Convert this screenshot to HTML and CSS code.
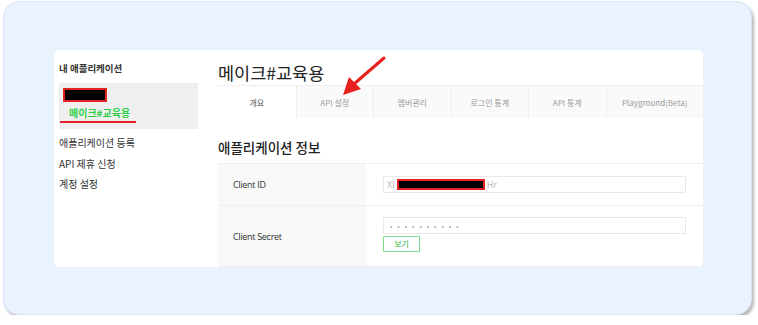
FILE: index.html
```html
<!DOCTYPE html>
<html>
<head>
    <title>내 애플리케이션</title>
    <link rel="stylesheet" href="styles.css">
</head>
<body>
    <div class="frame">
        <div class="card">
            <div class="sidebar">
                <div class="side-title">내 애플리케이션</div>
                <div class="app-box">
                    <div class="redact"></div>
                    <div class="app-name">메이크#교육용</div>
                    <div class="underline"></div>
                </div>
                <ul class="side-menu">
                    <li>애플리케이션 등록</li>
                    <li>API 제휴 신청</li>
                    <li>계정 설정</li>
                </ul>
            </div>

            <div class="main">
                <h1>메이크#교육용</h1>
                <div class="tabs">
                    <div class="tab active">개요</div>
                    <div class="tab">API 설정</div>
                    <div class="tab">멤버관리</div>
                    <div class="tab">로그인 통계</div>
                    <div class="tab">API 통계</div>
                    <div class="tab last">Playground(Beta)</div>
                </div>

                <h2>애플리케이션 정보</h2>
                <div class="info">
                    <div class="row">
                        <div class="label">Client ID</div>
                        <div class="value">
                            <div class="field">Xl<span class="redact-line"></span>Hr</div>
                        </div>
                    </div>
                    <div class="row tall">
                        <div class="label">Client Secret</div>
                        <div class="value top">
                            <div class="field dots">• • • • • • • • • •</div>
                            <button class="btn">보기</button>
                        </div>
                    </div>
                </div>

                <svg class="arrow" width="60" height="50" viewBox="0 0 60 50">
                    <line x1="54" y1="4" x2="24" y2="30" stroke="#e8201e" stroke-width="3" stroke-linecap="round"/>
                    <polygon points="13,41 19,23 31,35" fill="#e8201e"/>
                </svg>
            </div>
        </div>
    </div>
</body>
</html>
```

FILE: styles.css
```css
body { margin: 0; background: #fff; font-family: "Noto Sans CJK KR", "Noto Sans", sans-serif; color: #333; }

.frame { margin: 1px 0 0 3px; width: 749px; height: 314px; box-sizing: border-box; padding: 48px 0 0 50px; background: #eaf2fe; border: 1px solid #d6e5fa; border-radius: 16px; box-shadow: 2px 3px 3px rgba(0, 0, 0, 0.28); }

.card { display: flex; width: 649px; height: 217px; background: #fff; border-radius: 5px; overflow: hidden; }

.sidebar { width: 164px; padding: 9px 0 0 5px; box-sizing: border-box; }
.side-title { font-size: 9.5px; font-weight: 700; line-height: 18px; color: #333; }
.app-box { position: relative; width: 139px; height: 46px; margin-top: 6px; background: #efefef; }
.redact { position: absolute; left: 4px; top: 5px; width: 40px; height: 10px; background: #000; border: 2px solid #e52222; }
.app-name { position: absolute; left: 10px; top: 23px; font-size: 10px; font-weight: 700; line-height: 14px; color: #2fcf49; }
.underline { position: absolute; left: 1px; top: 38px; width: 76px; height: 2px; background: #e0202a; }
.side-menu { list-style: none; margin: 4px 0 0; padding: 0; }
.side-menu li { font-size: 10px; line-height: 20.5px; color: #333; }

.main { position: relative; flex: 1; }
.main h1 { margin: 0; padding-top: 10px; font-size: 17.5px; font-weight: 400; line-height: 25px; color: #222; }

.tabs { display: flex; height: 33px; border-top: 1px solid #eee; box-sizing: border-box; }
.tab { width: 77.5px; flex: none; display: flex; align-items: center; justify-content: center; font-size: 8px; color: #999; background: #fafafa; border-left: 1px solid #eee; box-sizing: border-box; }
.tab.active { background: #fff; color: #555; border-left: none; }
.tab.last { flex: 1; }

.main h2 { margin: 0; padding-top: 18px; font-size: 13.5px; font-weight: 500; line-height: 22px; color: #222; height: 45px; box-sizing: border-box; }

.info { border-top: 1px solid #eee; }
.row { display: flex; height: 41px; border-bottom: 1px solid #eee; }
.row.tall { height: 60px; }
.label { width: 148px; padding-left: 15px; box-sizing: border-box; display: flex; align-items: center; background: #f8f8f8; font-size: 9px; font-weight: 500; color: #333; font-family: "Open Sans", "Noto Sans", sans-serif; letter-spacing: -0.3px; }
.value { flex: 1; padding: 0 17px; display: flex; flex-direction: column; justify-content: center; }
.value.top { justify-content: flex-start; padding-top: 11px; }

.field { height: 17px; border: 1px solid #e8e8e8; box-sizing: border-box; display: flex; align-items: center; padding-left: 3px; font-size: 9px; color: #bbb; }
.redact-line { display: inline-block; width: 84px; height: 7px; margin: 0 2px; background: #000; border: 2px solid #e52222; }
.dots { font-size: 7px; color: #aaa; letter-spacing: 1.7px; padding-left: 6px; }

.btn { align-self: flex-start; margin-top: 2px; width: 37px; height: 16px; padding: 0; background: #fff; border: 1px solid #7ddb8a; border-radius: 1px; font-family: inherit; font-size: 8px; line-height: 14px; color: #35b84a; }

.arrow { position: absolute; left: 112px; top: 4px; }
```
